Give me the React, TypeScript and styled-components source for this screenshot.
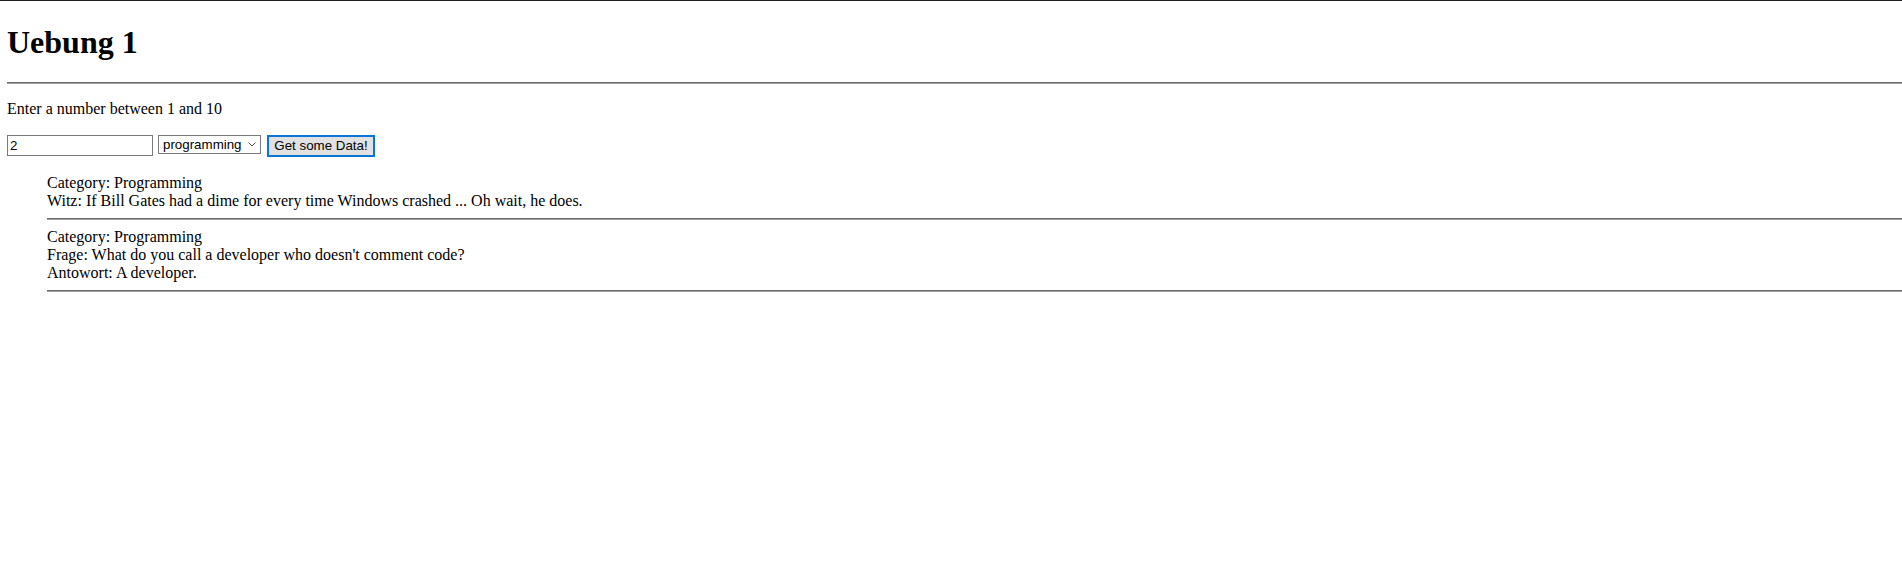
import React from "react";
import styled, { createGlobalStyle } from "styled-components";

const GlobalStyle = createGlobalStyle`
  html, body {
    margin: 0;
    padding: 0;
    background: #ffffff;
  }
  body {
    font-family: "Liberation Serif", "Times New Roman", serif;
    font-size: 16px;
    color: #000000;
  }
`;

const Page = styled.div`
  border-top: 1px solid #1f1f1f;
  padding-left: 7px;
  min-height: 568px;
  box-sizing: border-box;
`;

const Title = styled.h1`
  margin: 23px 0 21px;
  font-size: 32px;
  line-height: 37px;
  font-weight: bold;
`;

const Rule = styled.hr`
  margin: 8px 0;
  height: 0;
  border: none;
  border-top: 1px solid #6a6a6a;
  border-bottom: 1px solid #a3a3a3;
`;

const TitleRule = styled(Rule)`
  margin: 0;
`;

const Hint = styled.p`
  margin: 16px 0;
  line-height: 18px;
`;

const FormRow = styled.div`
  display: flex;
  align-items: flex-start;
  gap: 5px;
  padding: 1px 0;
  height: 24px;
  box-sizing: border-box;
  margin: 16px 0 0;
`;

const NumberInput = styled.input`
  box-sizing: border-box;
  width: 146px;
  height: 21px;
  margin: 0;
  padding: 1px 2px;
  border: 1px solid #7a7a7a;
  border-radius: 0;
  font-family: "Liberation Sans", Arial, sans-serif;
  font-size: 13.33px;
  color: #000;
  background: #fff;
  outline: none;
`;

const SelectWrap = styled.div`
  position: relative;
  width: 103px;
  height: 19px;
`;

const CategorySelect = styled.select`
  appearance: none;
  -webkit-appearance: none;
  box-sizing: border-box;
  width: 103px;
  height: 19px;
  margin: 0;
  padding: 0 16px 0 4px;
  border: 1px solid #7a7a7a;
  border-radius: 0;
  background: #fff;
  font-family: "Liberation Sans", Arial, sans-serif;
  font-size: 13.33px;
  line-height: 17px;
  color: #000;
  outline: none;
`;

const Chevron = styled.svg`
  position: absolute;
  right: 5px;
  top: 7px;
  width: 8px;
  height: 5px;
  pointer-events: none;
`;

const SubmitButton = styled.button`
  box-sizing: border-box;
  width: 108px;
  height: 22px;
  margin: 0 0 0 1px;
  padding: 0;
  border: 2px solid #0a74d8;
  border-radius: 0;
  background: #e1e1e1;
  font-family: "Liberation Sans", Arial, sans-serif;
  font-size: 13.33px;
  line-height: 18px;
  white-space: nowrap;
  text-align: center;
  color: #000;
  cursor: pointer;
`;

const JokeList = styled.ul`
  margin: 16px 0 0;
  padding: 0 0 0 40px;
  list-style: none;
`;

const JokeItem = styled.li`
  line-height: 18px;
`;

const Line = styled.div`
  line-height: 18px;
`;

type Joke =
  | { kind: "single"; category: string; joke: string }
  | { kind: "twopart"; category: string; setup: string; delivery: string };

const jokes: Joke[] = [
  {
    kind: "single",
    category: "Programming",
    joke: "If Bill Gates had a dime for every time Windows crashed ... Oh wait, he does.",
  },
  {
    kind: "twopart",
    category: "Programming",
    setup: "What do you call a developer who doesn't comment code?",
    delivery: "A developer.",
  },
];

export default function App() {
  return (
    <>
      <GlobalStyle />
      <Page>
        <Title>Uebung 1</Title>
        <TitleRule />
        <Hint>Enter a number between 1 and 10</Hint>
        <FormRow>
          <NumberInput type="text" defaultValue="2" />
          <SelectWrap>
            <CategorySelect defaultValue="programming">
              <option value="programming">programming</option>
              <option value="misc">misc</option>
              <option value="dark">dark</option>
            </CategorySelect>
            <Chevron viewBox="0 0 8 5">
              <path d="M0.5 0.5 L4 4 L7.5 0.5" fill="none" stroke="#4d4d4d" strokeWidth="1" />
            </Chevron>
          </SelectWrap>
          <SubmitButton type="button">Get some Data!</SubmitButton>
        </FormRow>
        <JokeList>
          {jokes.map((j, i) => (
            <JokeItem key={i}>
              <Line>Category: {j.category}</Line>
              {j.kind === "single" ? (
                <Line>Witz: {j.joke}</Line>
              ) : (
                <>
                  <Line>Frage: {j.setup}</Line>
                  <Line>Antowort: {j.delivery}</Line>
                </>
              )}
              <Rule />
            </JokeItem>
          ))}
        </JokeList>
      </Page>
    </>
  );
}
